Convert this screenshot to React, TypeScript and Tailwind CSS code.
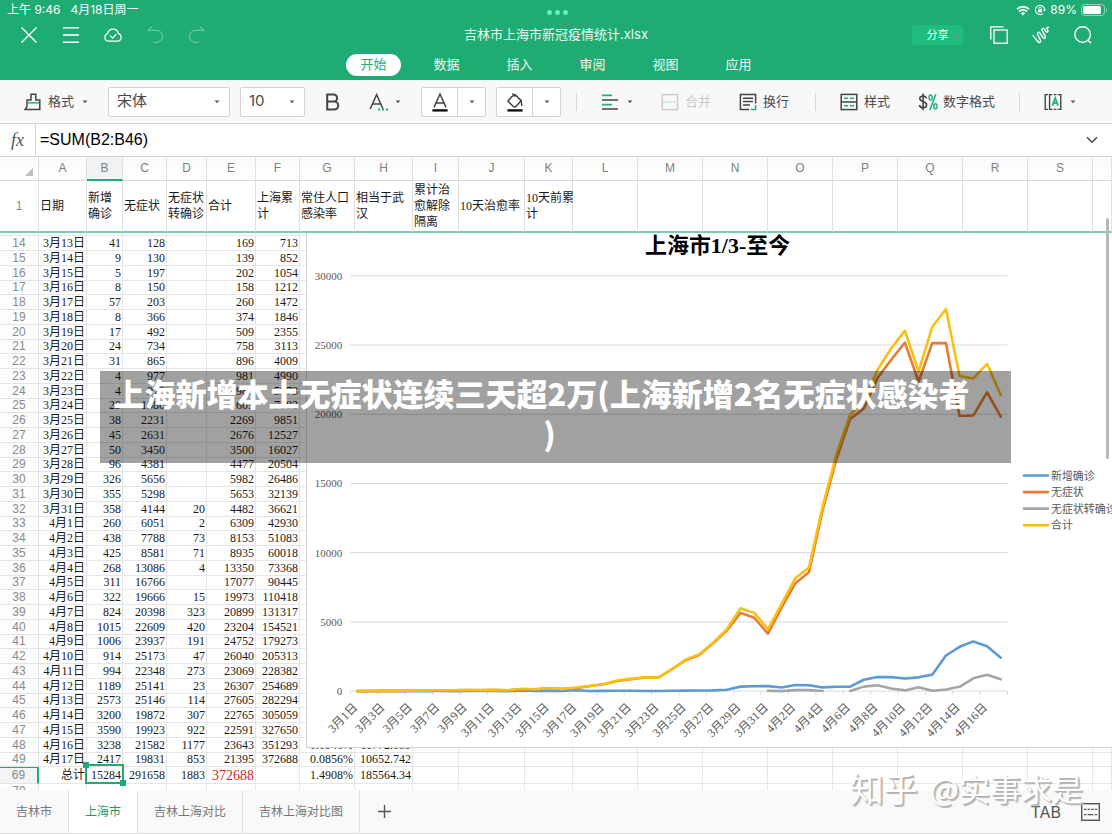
import React, { useState } from "react";
import clsx from "clsx";

type Row = {
    no: number;
    date: string;
    confirmed: number | string;
    asymptomatic: number | string;
    converted: number | string;
    total: number | string;
    sum: number | string;
    rate?: string;
    wuhan?: string;
};

const columns = [
    { name: "A", width: "w-[48px]", title: "日期" },
    { name: "B", width: "w-[36px]", title: "新增\n确诊" },
    { name: "C", width: "w-[44px]", title: "无症状" },
    { name: "D", width: "w-[40px]", title: "无症状\n转确诊" },
    { name: "E", width: "w-[49px]", title: "合计" },
    { name: "F", width: "w-[44px]", title: "上海累\n计" },
    { name: "G", width: "w-[55px]", title: "常住人口\n感染率" },
    { name: "H", width: "w-[58px]", title: "相当于武\n汉" },
    { name: "I", width: "w-[46px]", title: "累计治\n愈解除\n隔离" },
    { name: "J", width: "w-[66px]", title: "10天治愈率" },
    { name: "K", width: "w-[48px]", title: "10天前累\n计" },
    { name: "L", width: "w-[65px]", title: "" },
    { name: "M", width: "w-[65px]", title: "" },
    { name: "N", width: "w-[65px]", title: "" },
    { name: "O", width: "w-[65px]", title: "" },
    { name: "P", width: "w-[65px]", title: "" },
    { name: "Q", width: "w-[65px]", title: "" },
    { name: "R", width: "w-[65px]", title: "" },
    { name: "S", width: "w-[65px]", title: "" },
    { name: "", width: "w-auto", title: "" },
];

const rows: Row[] = [
    { no: 14, date: "3月13日", confirmed: 41, asymptomatic: 128, converted: "", total: 169, sum: 713 },
    { no: 15, date: "3月14日", confirmed: 9, asymptomatic: 130, converted: "", total: 139, sum: 852 },
    { no: 16, date: "3月15日", confirmed: 5, asymptomatic: 197, converted: "", total: 202, sum: 1054 },
    { no: 17, date: "3月16日", confirmed: 8, asymptomatic: 150, converted: "", total: 158, sum: 1212 },
    { no: 18, date: "3月17日", confirmed: 57, asymptomatic: 203, converted: "", total: 260, sum: 1472 },
    { no: 19, date: "3月18日", confirmed: 8, asymptomatic: 366, converted: "", total: 374, sum: 1846 },
    { no: 20, date: "3月19日", confirmed: 17, asymptomatic: 492, converted: "", total: 509, sum: 2355 },
    { no: 21, date: "3月20日", confirmed: 24, asymptomatic: 734, converted: "", total: 758, sum: 3113 },
    { no: 22, date: "3月21日", confirmed: 31, asymptomatic: 865, converted: "", total: 896, sum: 4009 },
    { no: 23, date: "3月22日", confirmed: 4, asymptomatic: 977, converted: "", total: 981, sum: 4990 },
    { no: 24, date: "3月23日", confirmed: 4, asymptomatic: 979, converted: "", total: 983, sum: 5973 },
    { no: 25, date: "3月24日", confirmed: 29, asymptomatic: 1580, converted: "", total: 1609, sum: 7582 },
    { no: 26, date: "3月25日", confirmed: 38, asymptomatic: 2231, converted: "", total: 2269, sum: 9851 },
    { no: 27, date: "3月26日", confirmed: 45, asymptomatic: 2631, converted: "", total: 2676, sum: 12527 },
    { no: 28, date: "3月27日", confirmed: 50, asymptomatic: 3450, converted: "", total: 3500, sum: 16027 },
    { no: 29, date: "3月28日", confirmed: 96, asymptomatic: 4381, converted: "", total: 4477, sum: 20504 },
    { no: 30, date: "3月29日", confirmed: 326, asymptomatic: 5656, converted: "", total: 5982, sum: 26486 },
    { no: 31, date: "3月30日", confirmed: 355, asymptomatic: 5298, converted: "", total: 5653, sum: 32139 },
    { no: 32, date: "3月31日", confirmed: 358, asymptomatic: 4144, converted: 20, total: 4482, sum: 36621 },
    { no: 33, date: "4月1日", confirmed: 260, asymptomatic: 6051, converted: 2, total: 6309, sum: 42930 },
    { no: 34, date: "4月2日", confirmed: 438, asymptomatic: 7788, converted: 73, total: 8153, sum: 51083 },
    { no: 35, date: "4月3日", confirmed: 425, asymptomatic: 8581, converted: 71, total: 8935, sum: 60018 },
    { no: 36, date: "4月4日", confirmed: 268, asymptomatic: 13086, converted: 4, total: 13350, sum: 73368 },
    { no: 37, date: "4月5日", confirmed: 311, asymptomatic: 16766, converted: "", total: 17077, sum: 90445 },
    { no: 38, date: "4月6日", confirmed: 322, asymptomatic: 19666, converted: 15, total: 19973, sum: 110418 },
    { no: 39, date: "4月7日", confirmed: 824, asymptomatic: 20398, converted: 323, total: 20899, sum: 131317 },
    { no: 40, date: "4月8日", confirmed: 1015, asymptomatic: 22609, converted: 420, total: 23204, sum: 154521 },
    { no: 41, date: "4月9日", confirmed: 1006, asymptomatic: 23937, converted: 191, total: 24752, sum: 179273 },
    { no: 42, date: "4月10日", confirmed: 914, asymptomatic: 25173, converted: 47, total: 26040, sum: 205313 },
    { no: 43, date: "4月11日", confirmed: 994, asymptomatic: 22348, converted: 273, total: 23069, sum: 228382 },
    { no: 44, date: "4月12日", confirmed: 1189, asymptomatic: 25141, converted: 23, total: 26307, sum: 254689 },
    { no: 45, date: "4月13日", confirmed: 2573, asymptomatic: 25146, converted: 114, total: 27605, sum: 282294 },
    { no: 46, date: "4月14日", confirmed: 3200, asymptomatic: 19872, converted: 307, total: 22765, sum: 305059 },
    { no: 47, date: "4月15日", confirmed: 3590, asymptomatic: 19923, converted: 922, total: 22591, sum: 327650 },
    { no: 48, date: "4月16日", confirmed: 3238, asymptomatic: 21582, converted: 1177, total: 23643, sum: 351293, rate: "0.0946%", wuhan: "11772.039" },
    { no: 49, date: "4月17日", confirmed: 2417, asymptomatic: 19831, converted: 853, total: 21395, sum: 372688, rate: "0.0856%", wuhan: "10652.742" },
];

const totalRow: Row = {
    no: 69, date: "总计", confirmed: 15284, asymptomatic: 291658, converted: 1883, total: 372688, sum: "", rate: "1.4908%", wuhan: "185564.34",
};

// March 1 - 12, the rows scrolled above the visible part
const earlyConfirmed = [1, 3, 2, 3, 0, 3, 4, 3, 4, 11, 5, 1];
const earlyAsymptomatic = [1, 5, 14, 16, 28, 45, 51, 62, 76, 64, 78, 64];

const confirmed = [...earlyConfirmed, ...rows.map((r) => Number(r.confirmed))];
const asymptomatic = [...earlyAsymptomatic, ...rows.map((r) => Number(r.asymptomatic))];
const total = [...earlyConfirmed.map((v, i) => v + earlyAsymptomatic[i]), ...rows.map((r) => Number(r.total))];
const converted = [...earlyConfirmed.map(() => null), ...rows.map((r) => (r.converted === "" ? null : Number(r.converted)))];

const PLOT_LEFT = 43;
const STEP = 13.72;
const ZERO = 459;

const toY = (v: number) => ZERO - v * 0.01387;

const toPath = (values: (number | null)[]) => {
    let path = "";
    let pen = "M";
    values.forEach((v, i) => {
        if (v === null) {
            pen = "M";
            return;
        }
        path += `${pen}${(PLOT_LEFT + STEP * (i + 0.5)).toFixed(1)} ${toY(v).toFixed(1)}`;
        pen = "L";
    });
    return path;
};

const series = [
    { name: "新增确诊", color: "#5b9bd5", values: confirmed },
    { name: "无症状", color: "#e67c35", values: asymptomatic },
    { name: "无症状转确诊", color: "#a5a5a5", values: converted },
    { name: "合计", color: "#fbbf10", values: total },
];

const dayLabel = (i: number) => (i < 31 ? `3月${i + 1}日` : `4月${i - 30}日`);

const Chart = () => (
    <svg
        width="900"
        height="515"
        viewBox="0 0 900 515"
        role="img"
        aria-label="上海市1/3-至今"
        className="absolute left-[306px] top-[76px] max-w-none border-b border-l border-[#d4d4d4] bg-white font-['Liberation_Serif','Noto_Sans_CJK_SC',serif]"
    >
        <text x="411" y="20" textAnchor="middle" fontSize="22" fontWeight="700" fill="#000">上海市1/3-至今</text>
        {[0, 5000, 10000, 15000, 20000, 25000, 30000].map((v) => (
            <g key={v}>
                <line x1={PLOT_LEFT} x2={PLOT_LEFT + STEP * 48} y1={toY(v)} y2={toY(v)} stroke="#d9d9d9" />
                <text x="35" y={toY(v) + 4} textAnchor="end" fontSize="11" fill="#595959">{v}</text>
            </g>
        ))}
        {Array.from({ length: 25 }, (_, i) => (
            <line key={i} x1={PLOT_LEFT + STEP * 2 * i} x2={PLOT_LEFT + STEP * 2 * i} y1={ZERO} y2={ZERO + 4} stroke="#d9d9d9" />
        ))}
        {Array.from({ length: 24 }, (_, i) => (
            <text
                key={i}
                transform={`translate(${PLOT_LEFT + STEP * (2 * i + 0.5) + 1} ${ZERO + 17}) rotate(-45)`}
                textAnchor="end"
                fontSize="12"
                fill="#595959"
            >
                {dayLabel(i * 2)}
            </text>
        ))}
        {series.map((s) => (
            <path key={s.name} d={toPath(s.values)} fill="none" stroke={s.color} strokeWidth="2.6" strokeLinejoin="round" strokeLinecap="round" />
        ))}
        {series.map((s, i) => (
            <g key={s.name}>
                <line x1="718" x2="742" y1={243 + i * 16.6} y2={243 + i * 16.6} stroke={s.color} strokeWidth="2.6" strokeLinecap="round" />
                <text x="745" y={247 + i * 16.6} fontSize="11" fill="#595959">{s.name}</text>
            </g>
        ))}
    </svg>
);

const Caret = () => (
    <svg width="6" height="4" viewBox="0 0 6 4" className="shrink-0" aria-hidden="true">
        <path d="M0.5 0.5h5L3 3.3z" fill="#5a5a5a" />
    </svg>
);

const Separator = () => <div className="h-[18px] w-px shrink-0 bg-[#d6d6d6]" />;

const Header = () => {
    const [menu, setMenu] = useState("开始");

    return (
        <header className="bg-[#1eac74] text-white">
            <div className="flex h-5 items-center justify-between pl-[7px] pr-1 text-xs">
                <div className="flex flex-1 gap-[10px]">
                    <span>上午 9:46</span>
                    <span>4月18日周一</span>
                </div>
                <div className="flex gap-[3px] pt-1">
                    <span className="size-[5px] rounded-full bg-[#62f0b4]" />
                    <span className="size-[5px] rounded-full bg-[#62f0b4]" />
                    <span className="size-[5px] rounded-full bg-[#62f0b4]" />
                </div>
                <div className="flex flex-1 items-center justify-end gap-1">
                    <svg width="14" height="11" viewBox="0 0 14 11" aria-hidden="true">
                        <path d="M1 4.2a8.6 8.6 0 0 1 12 0M3.1 6.5a5.6 5.6 0 0 1 7.8 0" fill="none" stroke="#fff" strokeWidth="1.8" />
                        <path d="M7 10.4 4.8 8.2a3.2 3.2 0 0 1 4.4 0z" fill="#fff" />
                    </svg>
                    <svg width="12" height="12" viewBox="0 0 12 12" fill="none" stroke="#fff" aria-hidden="true">
                        <path d="M8.9 9.6A4.6 4.6 0 1 1 10.6 6" strokeWidth="1.1" />
                        <path d="M9 5.6h3L10.5 7.8z" fill="#fff" stroke="none" />
                        <path d="M4.9 5.6V4.4a1.1 1.1 0 0 1 2.2 0v1.2" strokeWidth="0.9" />
                        <rect x="4" y="5.4" width="4" height="3" rx="0.5" fill="#fff" stroke="none" />
                    </svg>
                    <span>89%</span>
                    <svg width="27" height="13" viewBox="0 0 27 13" aria-hidden="true">
                        <rect x="0.5" y="0.5" width="23" height="11" rx="3" fill="none" stroke="#8fd6b9" />
                        <rect x="2" y="2" width="18" height="8" rx="1.6" fill="#fff" />
                        <path d="M25 4v4c1.6-.6 1.6-3.4 0-4z" fill="#8fd6b9" />
                    </svg>
                </div>
            </div>

            <div className="flex h-[30px] items-center justify-between px-5">
                <div className="flex flex-1 items-center gap-6">
                    <button type="button" aria-label="关闭">
                        <svg width="18" height="18" viewBox="0 0 18 18" fill="none" stroke="#fff" strokeWidth="1.4">
                            <path d="M1.5 1.5l15 15M16.5 1.5l-15 15" />
                        </svg>
                    </button>
                    <button type="button" aria-label="菜单">
                        <svg width="18" height="18" viewBox="0 0 18 18" fill="none" stroke="#fff" strokeWidth="1.4">
                            <path d="M1 1.8h16M1 9h16M1 16.2h16" />
                        </svg>
                    </button>
                    <button type="button" aria-label="已保存到云">
                        <svg width="18" height="18" viewBox="0 0 18 18" fill="none" stroke="#fff" strokeWidth="1.2" strokeLinecap="round" strokeLinejoin="round">
                            <path d="M4.6 15.2A3.9 3.9 0 0 1 3.6 7.6a5.5 5.5 0 0 1 10.8 0 3.9 3.9 0 0 1-1 7.6z" />
                            <path d="M6.4 9.8l2.2 2.2 3.4-3.5" />
                        </svg>
                    </button>
                    <button type="button" aria-label="撤销" className="opacity-30">
                        <svg width="18" height="18" viewBox="0 0 18 18" fill="none" stroke="#fff" strokeWidth="1.3">
                            <path d="M5.6 0.8L2.2 4.4h8.3a6 6 0 1 1 0 12H7" />
                        </svg>
                    </button>
                    <button type="button" aria-label="重做" className="opacity-30">
                        <svg width="18" height="18" viewBox="0 0 18 18" fill="none" stroke="#fff" strokeWidth="1.3">
                            <path d="M12.4 0.8l3.4 3.6H7.5a6 6 0 1 0 0 12H11" />
                        </svg>
                    </button>
                </div>
                <h1 className="text-[13px] text-[#e9f8f1]">吉林市上海市新冠疫情统计.xlsx</h1>
                <div className="flex flex-1 items-center justify-end gap-6">
                    <button type="button" className="mr-[3px] h-5 w-[51px] rounded-xs bg-[#20bb7e] text-[11px]">分享</button>
                    <button type="button" aria-label="窗口">
                        <svg width="18" height="18" viewBox="0 0 18 18" fill="none" stroke="#fff" strokeWidth="1.3">
                            <rect x="4" y="4" width="13.2" height="13.2" />
                            <path d="M0.8 13.5V0.8h12.8" />
                        </svg>
                    </button>
                    <button type="button" aria-label="画笔">
                        <svg width="18" height="18" viewBox="0 0 18 18" fill="none" stroke="#fff" strokeWidth="1.4" strokeLinecap="round" strokeLinejoin="round">
                            <path d="M1 9.6l5 6.2c1.2 1.4 3.4 0 2.4-1.7L5.6 8.6C4.6 6.8 6.7 5.4 7.9 7l3 4.6c1.3 1.6 3.2.2 2.3-1.5L10.1 4.6c-.9-1.8 1.2-3 2.3-1.5l1.2 2.2c1.2 1.6 3 .4 2.2-1.2l-.9-1.5c-.4-1 .6-1.6 1.7-1.2" />
                        </svg>
                    </button>
                    <button type="button" aria-label="搜索">
                        <svg width="18" height="18" viewBox="0 0 18 18" fill="none" stroke="#fff" strokeWidth="1.4">
                            <circle cx="8.6" cy="8.6" r="7.8" />
                            <path d="M13.6 14.2l3.4 2.8" />
                        </svg>
                    </button>
                </div>
            </div>

            <nav className="flex h-[30px] items-center justify-center gap-[18px]">
                {["开始", "数据", "插入", "审阅", "视图", "应用"].map((item) => (
                    <button
                        key={item}
                        type="button"
                        onClick={() => setMenu(item)}
                        className={clsx("h-[22px] w-[55px] rounded-full text-[13px]", menu === item ? "bg-white text-[#1eac74]" : "text-[#eefaf5]")}
                    >
                        {item}
                    </button>
                ))}
            </nav>
        </header>
    );
};

const Toolbar = () => (
    <div className="flex h-[44px] items-center overflow-hidden whitespace-nowrap border-b border-[#d9d9d9] bg-[#f8f8f8] pl-6 text-[13px] text-[#4a4a4a]">
        <button type="button" className="mr-5 flex shrink-0 items-center gap-[6px]">
            <svg width="18" height="18" viewBox="0 0 18 18" fill="none" stroke="#444" strokeWidth="1.5">
                <path d="M1 16.6h14.8V7h-4V1.2H7V7H3v5.2c0 2.4-.6 3.4-2 4.4z" />
                <path d="M3.6 9.8h11.6" stroke="#1eb27a" />
            </svg>
            格式
            <span className="pl-[2px]"><Caret /></span>
        </button>
        <label className="relative mr-[10px] flex shrink-0 items-center">
            <select aria-label="字体" className="h-[30px] w-[122px] appearance-none rounded-xs border border-[#d3d3d3] bg-white pl-2 text-[15px]">
                <option>宋体</option>
            </select>
            <span className="pointer-events-none absolute right-[10px]"><Caret /></span>
        </label>
        <label className="relative mr-5 flex shrink-0 items-center">
            <select aria-label="字号" className="h-[30px] w-[65px] appearance-none rounded-xs border border-[#d3d3d3] bg-white pl-2 text-[15px]">
                <option>10</option>
            </select>
            <span className="pointer-events-none absolute right-[10px]"><Caret /></span>
        </label>
        <button type="button" aria-label="加粗" className="mr-7 shrink-0">
            <svg width="16" height="18" viewBox="0 0 16 18" fill="none" stroke="#444" strokeWidth="2">
                <path d="M2.2 1.4h6.3a3.6 3.6 0 0 1 0 7.2H2.2zM2.2 8.6h7a4 4 0 0 1 0 8h-7z" />
            </svg>
        </button>
        <button type="button" aria-label="字体格式" className="mr-5 flex shrink-0 items-center gap-[6px]">
            <svg width="20" height="18" viewBox="0 0 20 18" fill="none" stroke="#444" strokeWidth="1.5">
                <path d="M1.2 16L7.6 1.6 14 16M3.6 11h8" />
                <path d="M9 16.6h2M13 16.6h2M17 16.6h2" stroke="#1eb27a" strokeWidth="2" />
            </svg>
            <Caret />
        </button>
        <div className="mr-[10px] flex h-[30px] w-[65px] shrink-0 rounded-xs border border-[#d3d3d3] bg-white">
            <button type="button" aria-label="字体颜色" className="flex w-[36px] items-center justify-center border-r border-[#d3d3d3]">
                <svg width="18" height="20" viewBox="0 0 18 20" fill="none" stroke="#444" strokeWidth="1.5">
                    <path d="M3 15.4L9 2l6 13.4M5.2 11h7.6" />
                    <path d="M1.4 18.4h15.2" stroke="#111" strokeWidth="2.4" />
                </svg>
            </button>
            <button type="button" aria-label="更多字体颜色" className="flex flex-1 items-center justify-center"><Caret /></button>
        </div>
        <div className="mr-[15px] flex h-[30px] w-[65px] shrink-0 rounded-xs border border-[#d3d3d3] bg-white">
            <button type="button" aria-label="填充颜色" className="flex w-[36px] items-center justify-center border-r border-[#d3d3d3]">
                <svg width="18" height="20" viewBox="0 0 18 20" fill="none" stroke="#444" strokeWidth="1.5">
                    <path d="M5.8 4.6L2 9.2l5.6 5.6h2.2l5.4-6.2-6-6z" />
                    <path d="M6.4 1.4l3 3.2M15.2 8.6l.6 5.4" />
                    <path d="M1.4 18.4h15.2" stroke="#111" strokeWidth="2.4" />
                </svg>
            </button>
            <button type="button" aria-label="更多填充颜色" className="flex flex-1 items-center justify-center"><Caret /></button>
        </div>
        <Separator />
        <button type="button" aria-label="对齐" className="ml-6 mr-7 flex shrink-0 items-center gap-2">
            <svg width="18" height="18" viewBox="0 0 18 18" fill="none" stroke="#444" strokeWidth="1.6">
                <path d="M1 7h16M1 16h16" />
                <path d="M1 2.4h10M1 11.6h10" stroke="#1eb27a" />
            </svg>
            <Caret />
        </button>
        <button type="button" disabled className="mr-7 flex shrink-0 items-center gap-[6px] text-[#cacaca]">
            <svg width="18" height="18" viewBox="0 0 18 18" fill="none" stroke="#cacaca" strokeWidth="1.4">
                <rect x="1.2" y="1.6" width="15.4" height="15" />
                <path d="M2 9h14" stroke="#a8e0c9" strokeDasharray="2 1.4" />
            </svg>
            合并
        </button>
        <button type="button" className="mr-[26px] flex shrink-0 items-center gap-[6px]">
            <svg width="18" height="18" viewBox="0 0 18 18" fill="none" stroke="#444" strokeWidth="1.5">
                <path d="M10 16.6H1.4V1.4h15.2v9M4 5.2h10M4 8.6h10M4 12h7" />
                <path d="M16.6 12v4.4h-4.8" stroke="#1eb27a" />
            </svg>
            换行
        </button>
        <Separator />
        <button type="button" className="ml-6 mr-7 flex shrink-0 items-center gap-[6px]">
            <svg width="18" height="18" viewBox="0 0 18 18" fill="none" stroke="#444" strokeWidth="1.5">
                <rect x="1.2" y="1.4" width="15.6" height="15.2" />
                <path d="M1.2 9h15.6" />
                <path d="M4 5.2h4M10 5.2h4M4 12.8h4M10 12.8h4" stroke="#1eb27a" />
            </svg>
            样式
        </button>
        <button type="button" className="mr-6 flex shrink-0 items-center gap-[5px]">
            <svg width="20" height="18" viewBox="0 0 20 18" fill="none" stroke="#444" strokeWidth="1.6">
                <path d="M8.4 5.4C8 3.8 6.7 3 5 3 3 3 1.8 4 1.8 5.6 1.8 9.6 8.6 7.6 8.6 12c0 1.7-1.4 2.8-3.5 2.8-2 0-3.4-1-3.7-2.8M5.1 0.6v16.6" />
                <path d="M17.8 1.2l-6 15.8" stroke="#1eb27a" />
                <ellipse cx="12.6" cy="4.6" rx="1.6" ry="2.6" stroke="#1eb27a" strokeWidth="1.4" />
                <ellipse cx="17.4" cy="13.4" rx="1.6" ry="2.6" stroke="#1eb27a" strokeWidth="1.4" />
            </svg>
            数字格式
        </button>
        <Separator />
        <button type="button" aria-label="行高列宽" className="ml-6 flex shrink-0 items-center gap-2">
            <svg width="18" height="18" viewBox="0 0 18 18" fill="none" stroke="#444" strokeWidth="1.4">
                <path d="M4 1.6H1.2v14.8H4" />
                <path d="M5.6 1v16M16.8 1v16" />
                <path d="M5.6 1.6h11M5.6 16.4h11" strokeDasharray="2.8 1.2" />
                <path d="M8.4 12.6l2.8-7.6 2.8 7.6M9.4 10.2h3.6" stroke="#1eb27a" strokeWidth="1.8" />
            </svg>
            <Caret />
        </button>
    </div>
);

const FormulaBar = () => (
    <div className="flex h-[33px] items-stretch border-b border-[#d4d4d4] bg-white">
        <label htmlFor="formula" className="flex w-9 items-center justify-center border-r border-[#d4d4d4] font-['Liberation_Serif',serif] text-lg italic text-[#555]">fx</label>
        <input
            id="formula"
            defaultValue="=SUM(B2:B46)"
            className="min-w-0 flex-1 pl-1 font-['Liberation_Sans',sans-serif] text-base text-black outline-none"
        />
        <button type="button" aria-label="展开" className="px-[14px]">
            <svg width="12" height="8" viewBox="0 0 12 8" fill="none" stroke="#444" strokeWidth="1.5">
                <path d="M1 1.2l5 5 5-5" />
            </svg>
        </button>
    </div>
);

const rowHeader = "border-b border-r border-[#e4e4e4] bg-[#fdfdfd] p-0 text-center font-['Liberation_Sans',sans-serif] font-normal text-[#8a8a8a]";
const cell = "whitespace-nowrap border-b border-r border-[#e6e6e6] p-0 pr-px text-right";

const Sheet = () => (
    <main className="relative min-h-0 flex-1 overflow-hidden bg-white">
        <table className="w-full table-fixed border-separate border-spacing-0 text-xs leading-[13px] text-[#1a1a1a] font-['Liberation_Serif','Noto_Sans_CJK_SC',serif]">
            <colgroup>
                <col className="w-[39px]" />
                {columns.map((c, i) => <col key={i} className={c.width} />)}
            </colgroup>
            <thead>
                <tr className="h-6 bg-gradient-to-b from-[#fafafa] to-white font-['Liberation_Sans',sans-serif] text-[#808080]">
                    <td className="border-b border-r border-[#dcdcdc] p-0">
                        <svg width="8" height="8" viewBox="0 0 8 8" className="ml-auto mr-[5px] mt-[6px]" aria-hidden="true">
                            <path d="M8 0v8H0z" fill="#bdbdbd" />
                        </svg>
                    </td>
                    {columns.map((c, i) => (
                        <th
                            key={i}
                            scope="col"
                            className={clsx("border-r border-r-[#e0e0e0] p-0 font-normal", c.name === "B" ? "border-b-2 border-b-[#1eac74] bg-[#f0f2f3]" : "border-b border-b-[#dcdcdc]")}
                        >
                            {c.name}
                        </th>
                    ))}
                </tr>
                <tr className="h-[52px]">
                    <th scope="row" className="border-b-2 border-r border-b-[#7dccb0] border-r-[#e4e4e4] p-0 font-['Liberation_Sans',sans-serif] font-normal text-[#8a8a8a]">1</th>
                    {columns.map((c, i) => (
                        <td key={i} className="whitespace-pre border-b-2 border-r border-b-[#7dccb0] border-r-[#e0e0e0] p-0 pl-px text-left leading-4">
                            {c.title}
                        </td>
                    ))}
                </tr>
            </thead>
            <tbody>
                <tr className="h-[3px]">
                    <th className={rowHeader} />
                    <td className={cell}>
                        <div className="flex h-[2px] items-end justify-end overflow-hidden">3月12日</div>
                    </td>
                    {columns.slice(1).map((c, i) => <td key={i} className={cell} />)}
                </tr>
                {rows.map((r, i) => (
                    <tr key={r.no} className={i % 4 === 3 ? "h-[14px]" : "h-[15px]"}>
                        <th scope="row" className={rowHeader}>{r.no}</th>
                        <td className={cell}>{r.date}</td>
                        <td className={cell}>{r.confirmed}</td>
                        <td className={cell}>{r.asymptomatic}</td>
                        <td className={cell}>{r.converted}</td>
                        <td className={cell}>{r.total}</td>
                        <td className={cell}>{r.sum}</td>
                        <td className={cell}>{r.rate}</td>
                        <td className={cell}>{r.wuhan}</td>
                        {columns.slice(8).map((c, n) => <td key={n} className={cell} />)}
                    </tr>
                ))}
                <tr className="h-[17px]">
                    <th scope="row" className="border-b border-r-2 border-t border-b-[#e4e4e4] border-r-[#1eac74] border-t-[#1eac74] bg-[#f3f4f5] p-0 font-['Liberation_Sans',sans-serif] font-normal text-[#8a8a8a]">
                        {totalRow.no}
                    </th>
                    <td className={cell}>{totalRow.date}</td>
                    <td className={clsx(cell, "relative")}>
                        {totalRow.confirmed}
                        <div className="pointer-events-none absolute -inset-x-[2px] -bottom-px -top-[3px] border-2 border-[#1eac74]">
                            <span className="absolute -left-[4px] -top-[4px] size-[6px] bg-[#1eac74]" />
                            <span className="absolute -bottom-[4px] -right-[4px] size-[6px] bg-[#1eac74]" />
                        </div>
                    </td>
                    <td className={cell}>{totalRow.asymptomatic}</td>
                    <td className={cell}>{totalRow.converted}</td>
                    <td className={clsx(cell, "text-sm leading-[15px] text-[#e02020]")}>{totalRow.total}</td>
                    <td className={cell} />
                    <td className={cell}>{totalRow.rate}</td>
                    <td className={cell}>{totalRow.wuhan}</td>
                    {columns.slice(8).map((c, n) => <td key={n} className={cell} />)}
                </tr>
                <tr className="h-[15px]">
                    <th scope="row" className={rowHeader}>70</th>
                    {columns.map((c, n) => <td key={n} className={cell} />)}
                </tr>
            </tbody>
        </table>
        <Chart />
        <div className="absolute right-[3px] top-[61px] h-[241px] w-[3px] rounded-full bg-[#b8b8b8]" />
    </main>
);

const SheetTabs = () => {
    const [active, setActive] = useState("上海市");

    return (
        <footer className="flex h-[44px] items-stretch border-b border-[#dedede] bg-[#f9f9f9] text-xs text-[#777]">
            {["吉林市", "上海市", "吉林上海对比", "吉林上海对比图"].map((name) => (
                <button
                    key={name}
                    type="button"
                    onClick={() => setActive(name)}
                    className={clsx("border-r border-[#e2e2e2] px-4", active === name && "bg-white text-[#1f9b68]")}
                >
                    {name}
                </button>
            ))}
            <button type="button" aria-label="新建工作表" className="px-[18px]">
                <svg width="13" height="13" viewBox="0 0 13 13" fill="none" stroke="#555" strokeWidth="1.4">
                    <path d="M6.5 0v13M0 6.5h13" />
                </svg>
            </button>
            <div className="ml-auto flex items-center gap-5 pr-3 text-base text-[#555]">
                <button type="button">TAB</button>
                <button type="button" aria-label="键盘">
                    <svg width="19" height="18" viewBox="0 0 19 18" fill="none" stroke="#555" strokeWidth="1.4">
                        <rect x="0.7" y="0.7" width="17.6" height="16.6" />
                        <path d="M3 6.4h2.4M6.6 6.4H9M10.2 6.4h2.4M13.8 6.4h2.4M3 11.6h2.4M6.6 11.6h5.8M13.8 11.6h2.4" />
                    </svg>
                </button>
            </div>
        </footer>
    );
};

export default function App() {
    return (
        <div className="relative flex h-screen flex-col overflow-hidden bg-white font-[Inter,'Noto_Sans_CJK_SC',sans-serif]">
            <Header />
            <Toolbar />
            <FormulaBar />
            <Sheet />
            <SheetTabs />
            <div className="absolute left-[100px] right-[101px] top-[371px] bg-black/37 pb-[10px] pl-3 pr-6 pt-[2px] text-center text-[31px] font-black leading-10 text-white font-['Noto_Sans_CJK_SC',sans-serif]">
                <p className="pr-4">上海新增本土无症状连续三天超2万(上海新增2名无症状感染者</p>
                <p>)</p>
            </div>
            <div className="pointer-events-none absolute bottom-[26px] right-[29px] flex items-center gap-3 whitespace-nowrap text-[31px] leading-10 text-white [text-shadow:1px_1px_1px_#b0b0b0,2px_2px_1px_#b8b8b8] font-['Noto_Sans_CJK_SC',sans-serif]">
                <span className="text-[34px]">知乎</span>
                <span>@实事求是</span>
            </div>
        </div>
    );
}
